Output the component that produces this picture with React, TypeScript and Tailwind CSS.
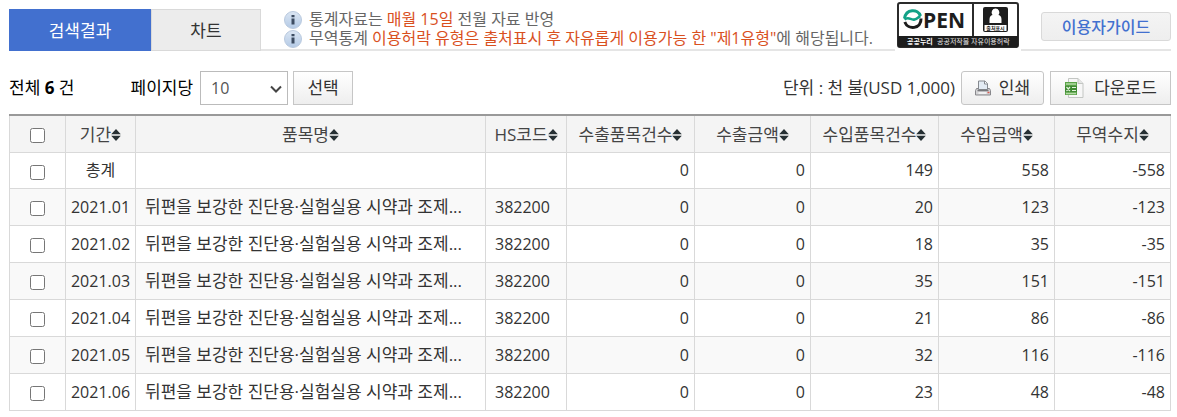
import { useState } from "react";

type Row = {
  period: string;
  item: string;
  hsCode: string;
  values: string[];
};

const ITEM_NAME = "뒤편을 보강한 진단용·실험실용 시약과 조제...";

const rows: Row[] = [
  { period: "총계", item: "", hsCode: "", values: ["0", "0", "149", "558", "-558"] },
  { period: "2021.01", item: ITEM_NAME, hsCode: "382200", values: ["0", "0", "20", "123", "-123"] },
  { period: "2021.02", item: ITEM_NAME, hsCode: "382200", values: ["0", "0", "18", "35", "-35"] },
  { period: "2021.03", item: ITEM_NAME, hsCode: "382200", values: ["0", "0", "35", "151", "-151"] },
  { period: "2021.04", item: ITEM_NAME, hsCode: "382200", values: ["0", "0", "21", "86", "-86"] },
  { period: "2021.05", item: ITEM_NAME, hsCode: "382200", values: ["0", "0", "32", "116", "-116"] },
  { period: "2021.06", item: ITEM_NAME, hsCode: "382200", values: ["0", "0", "23", "48", "-48"] },
];

const columns = [
  { label: "기간", width: "w-[70px]" },
  { label: "품목명", width: "" },
  { label: "HS코드", width: "w-[81px]" },
  { label: "수출품목건수", width: "w-[128px]" },
  { label: "수출금액", width: "w-[116px]" },
  { label: "수입품목건수", width: "w-[128px]" },
  { label: "수입금액", width: "w-[116px]" },
  { label: "무역수지", width: "w-[116px]" },
];

function InfoIcon() {
  return (
    <svg width="18" height="18" viewBox="0 0 18 18" className="shrink-0" aria-hidden="true">
      <defs>
        <linearGradient id="info" x1="0" y1="0" x2="0" y2="1">
          <stop offset="0" stopColor="#dbe6f3" />
          <stop offset="1" stopColor="#b4cae6" />
        </linearGradient>
      </defs>
      <circle cx="9" cy="9" r="8.5" fill="url(#info)" stroke="#b9c9de" />
      <path d="M7.5 4h3v2.200h-3zM7.500 7.500h3V13.500h-3z" fill="#3d4c62" />
    </svg>
  );
}

function SortIcon() {
  return (
    <svg width="10" height="12" viewBox="0 0 10 12" className="shrink-0" aria-hidden="true">
      <path d="M5 0l4.800 5.200H.2zM5 12L.2 6.800h9.600z" fill="#263034" />
    </svg>
  );
}

function PrinterIcon() {
  return (
    <svg width="16" height="16" viewBox="0 0 16 16" aria-hidden="true">
      <path d="M1.500 8.500h13l1 2v4.500H.5v-4.500z" fill="#d4d4d6" stroke="#88888c" />
      <path d="M3.500 9.500v-8.500h6.500l2.500 2.500v6z" fill="#e3ebf3" stroke="#85898f" />
      <path d="M9.500 1v3h3" fill="#fff" stroke="#85898f" />
      <path d="M2.500 10.500h11" stroke="#77777b" strokeWidth="1.500" />
      <path d="M3.500 13h8" stroke="#fafafa" strokeWidth="1.500" />
      <path d="M12.500 12.500h2" stroke="#d65b52" strokeWidth="1.500" />
    </svg>
  );
}

function ExcelIcon() {
  return (
    <svg width="20" height="20" viewBox="0 0 20 20" aria-hidden="true">
      <path d="M4.500.5h9.500l5 5v14H4.500z" fill="#f7f7f7" stroke="#c3c6c3" />
      <path d="M14 .5v5h5" fill="#e4e6e4" stroke="#c3c6c3" />
      <path d="M1 4h12v13H1z" fill="#5ba348" />
      <path d="M2 6h10M2 15.500h10" stroke="#b4dba6" strokeWidth="1.300" />
      <path d="M1 8h12v6H1z" fill="#3f8a33" />
      <path d="M2.500 9l3.500 4M6 9l-3.500 4M8 12.500h4M8 9.500h4" stroke="#e3f4dc" strokeWidth="1.200" />
    </svg>
  );
}

function OpenBadge() {
  return (
    <svg width="122" height="46" viewBox="0 0 122 46" role="img" aria-label="OPEN 공공누리 출처표시">
      <rect x="1" y="1" width="120" height="44" rx="2" fill="#fff" stroke="#2b2b2b" strokeWidth="2" />
      <path d="M1 34h120v11H1z" fill="#1d1d1d" />
      <path d="M76 1v33" stroke="#2b2b2b" strokeWidth="2" />
      <g fill="none" strokeWidth="3">
        <path d="M7.500 16.500C9 6.500 21 6.500 23.500 14" stroke="#12a287" />
        <path d="M7.500 17.500c4-3.500 6.500 1 10 0 3-.8 4-2.800 6-3.500" stroke="#12a287" strokeWidth="2.600" />
        <path d="M7.800 20C11 28.500 24.500 27 24 16.500" stroke="#1d1d1d" />
      </g>
      <text x="26" y="26" fontSize="21" fontWeight="700" fill="#1d1d1d">
        PEN
      </text>
      <rect x="86" y="5" width="25" height="25" rx="2" fill="#1d1d1d" />
      <path d="M98.500 6.500a4 4 0 0 1 3 6.500c2 .5 3 2 3 4.500v3.500h-12v-3.500c0-2.500 1-4 3-4.500a4 4 0 0 1 3-6.500z" fill="#fff" />
      <path d="M87.500 23h22v6h-22z" fill="#fff" />
      <text x="98.500" y="28" fontSize="5" fontWeight="700" textAnchor="middle" fill="#1d1d1d">
        출처표시
      </text>
      <text x="10" y="42" fontSize="7" fontWeight="700" fill="#fff">
        공공누리
      </text>
      <text x="40" y="42" fontSize="7" fill="#e4e4e4">
        공공저작물 자유이용허락
      </text>
    </svg>
  );
}

export default function App() {
  const [tab, setTab] = useState("result");
  const [checked, setChecked] = useState<string[]>([]);
  const allChecked = checked.length === rows.length;

  const toggle = (period: string) =>
    setChecked((prev) =>
      prev.includes(period) ? prev.filter((p) => p !== period) : [...prev, period]
    );

  const tabClass = (name: string) =>
    tab === name
      ? "bg-[#4270cf] text-white border-[#4270cf]"
      : "bg-[#ececec] text-[#333] border-[#d9d9d9]";

  return (
    <main className="pl-[9px] pr-[6px] bg-white text-[#333] text-[17px] leading-6 font-['Open_Sans','Noto_Sans_CJK_KR',sans-serif]">
      <header className="flex h-[51px] border-b-2 border-[#e5e5e5]">
        <div role="tablist" className="flex mt-[9px] -mb-0.5 shrink-0">
          <button
            role="tab"
            aria-selected={tab === "result"}
            onClick={() => setTab("result")}
            className={`w-[142px] pt-0.5 border ${tabClass("result")}`}
          >
            검색결과
          </button>
          <button
            role="tab"
            aria-selected={tab === "chart"}
            onClick={() => setTab("chart")}
            className={`w-[110px] pt-0.5 border ${tabClass("chart")}`}
          >
            차트
          </button>
        </div>

        <ul className="ml-[23px] mt-2.5 text-base leading-[19px] text-[#666] whitespace-nowrap">
          <li className="flex items-center gap-[7px] h-[19px]">
            <InfoIcon />
            <p>
              통계자료는 <span className="text-[#d9501e]">매월 15일</span> 전월 자료 반영
            </p>
          </li>
          <li className="flex items-center gap-[7px] h-[19px]">
            <InfoIcon />
            <p>
              무역통계{" "}
              <span className="text-[#d9501e]">
                이용허락 유형은 출처표시 후 자유롭게 이용가능 한 "제1유형"
              </span>
              에 해당됩니다.
            </p>
          </li>
        </ul>

        <div className="ml-auto -mb-0.5 px-0.5 pt-0.5 bg-white shrink-0">
          <OpenBadge />
        </div>

        <button className="ml-5 mt-3 h-[29px] w-[130px] shrink-0 rounded-[3px] border border-[#d9d9d9] bg-linear-to-b from-[#f4f4f4] to-[#eee] text-base leading-none font-medium text-[#4270cf]">
          이용자가이드
        </button>
      </header>

      <div className="flex items-center mt-5 h-[34px] whitespace-nowrap">
        <p className="text-black">
          전체 <strong>6</strong> 건
        </p>
        <label htmlFor="page-size" className="ml-14 text-black">
          페이지당
        </label>
        <div className="relative ml-[7px]">
          <select
            id="page-size"
            defaultValue="10"
            className="block appearance-none w-[88px] h-[34px] pl-2.5 border border-[#bbb] bg-white text-base text-[#555]"
          >
            <option>10</option>
            <option>20</option>
            <option>50</option>
          </select>
          <svg
            width="12"
            height="8"
            viewBox="0 0 12 8"
            className="absolute right-1.5 top-[14px] pointer-events-none"
            aria-hidden="true"
          >
            <path d="M1 1.500l5 5 5-5" fill="none" stroke="#444" strokeWidth="2" />
          </svg>
        </div>
        <button className="ml-[5px] w-[60px] h-[34px] border border-[#c6c6c6] bg-linear-to-b from-white to-[#eee]">
          선택
        </button>

        <p className="ml-auto">단위 : 천 불(USD 1,000)</p>
        <button className="flex items-center justify-center gap-2 ml-1.5 w-[83px] h-[34px] rounded-[3px] border border-[#c6c6c6] bg-linear-to-b from-white to-[#eee]">
          <PrinterIcon />
          인쇄
        </button>
        <button className="flex items-center justify-center gap-2.5 ml-1.5 w-[121px] h-[34px] border border-[#c6c6c6] bg-linear-to-b from-white to-[#eee]">
          <ExcelIcon />
          다운로드
        </button>
      </div>

      <table className="mt-[9px] w-full table-fixed border-collapse border border-[#d9d9d9] border-t-2 border-t-[#999]">
        <thead>
          <tr className="h-[37px] bg-[#f4f4f4] text-[#444]">
            <th className="w-[56px] border-r border-[#d9d9d9]">
              <input
                type="checkbox"
                aria-label="전체 선택"
                checked={allChecked}
                onChange={() => setChecked(allChecked ? [] : rows.map((r) => r.period))}
                className="block mx-auto mt-1 size-[15px]"
              />
            </th>
            {columns.map((col) => (
              <th
                key={col.label}
                className={`${col.width} pt-0.5 border-r border-[#d9d9d9] font-normal`}
              >
                <button className="inline-flex items-center whitespace-nowrap">
                  {col.label}
                  <SortIcon />
                </button>
              </th>
            ))}
          </tr>
        </thead>
        <tbody className="text-base">
          {rows.map((row) => (
            <tr
              key={row.period}
              className="h-[37px] first:h-[36px] border-t border-[#d9d9d9] even:bg-[#f9f9f9]"
            >
              <td className="border-r border-[#d9d9d9]">
                <input
                  type="checkbox"
                  aria-label={`${row.period} 선택`}
                  checked={checked.includes(row.period)}
                  onChange={() => toggle(row.period)}
                  className="block mx-auto mt-1 size-[15px]"
                />
              </td>
              <td className="border-r border-[#d9d9d9] text-center">{row.period}</td>
              <td className="truncate border-r border-[#d9d9d9] px-[9px] text-[17px]">
                {row.item}
              </td>
              <td className="border-r border-[#d9d9d9] pl-[9px]">{row.hsCode}</td>
              {row.values.map((value, i) => (
                <td key={i} className="border-r border-[#d9d9d9] pr-[5px] text-right">
                  {value}
                </td>
              ))}
            </tr>
          ))}
        </tbody>
      </table>
    </main>
  );
}
